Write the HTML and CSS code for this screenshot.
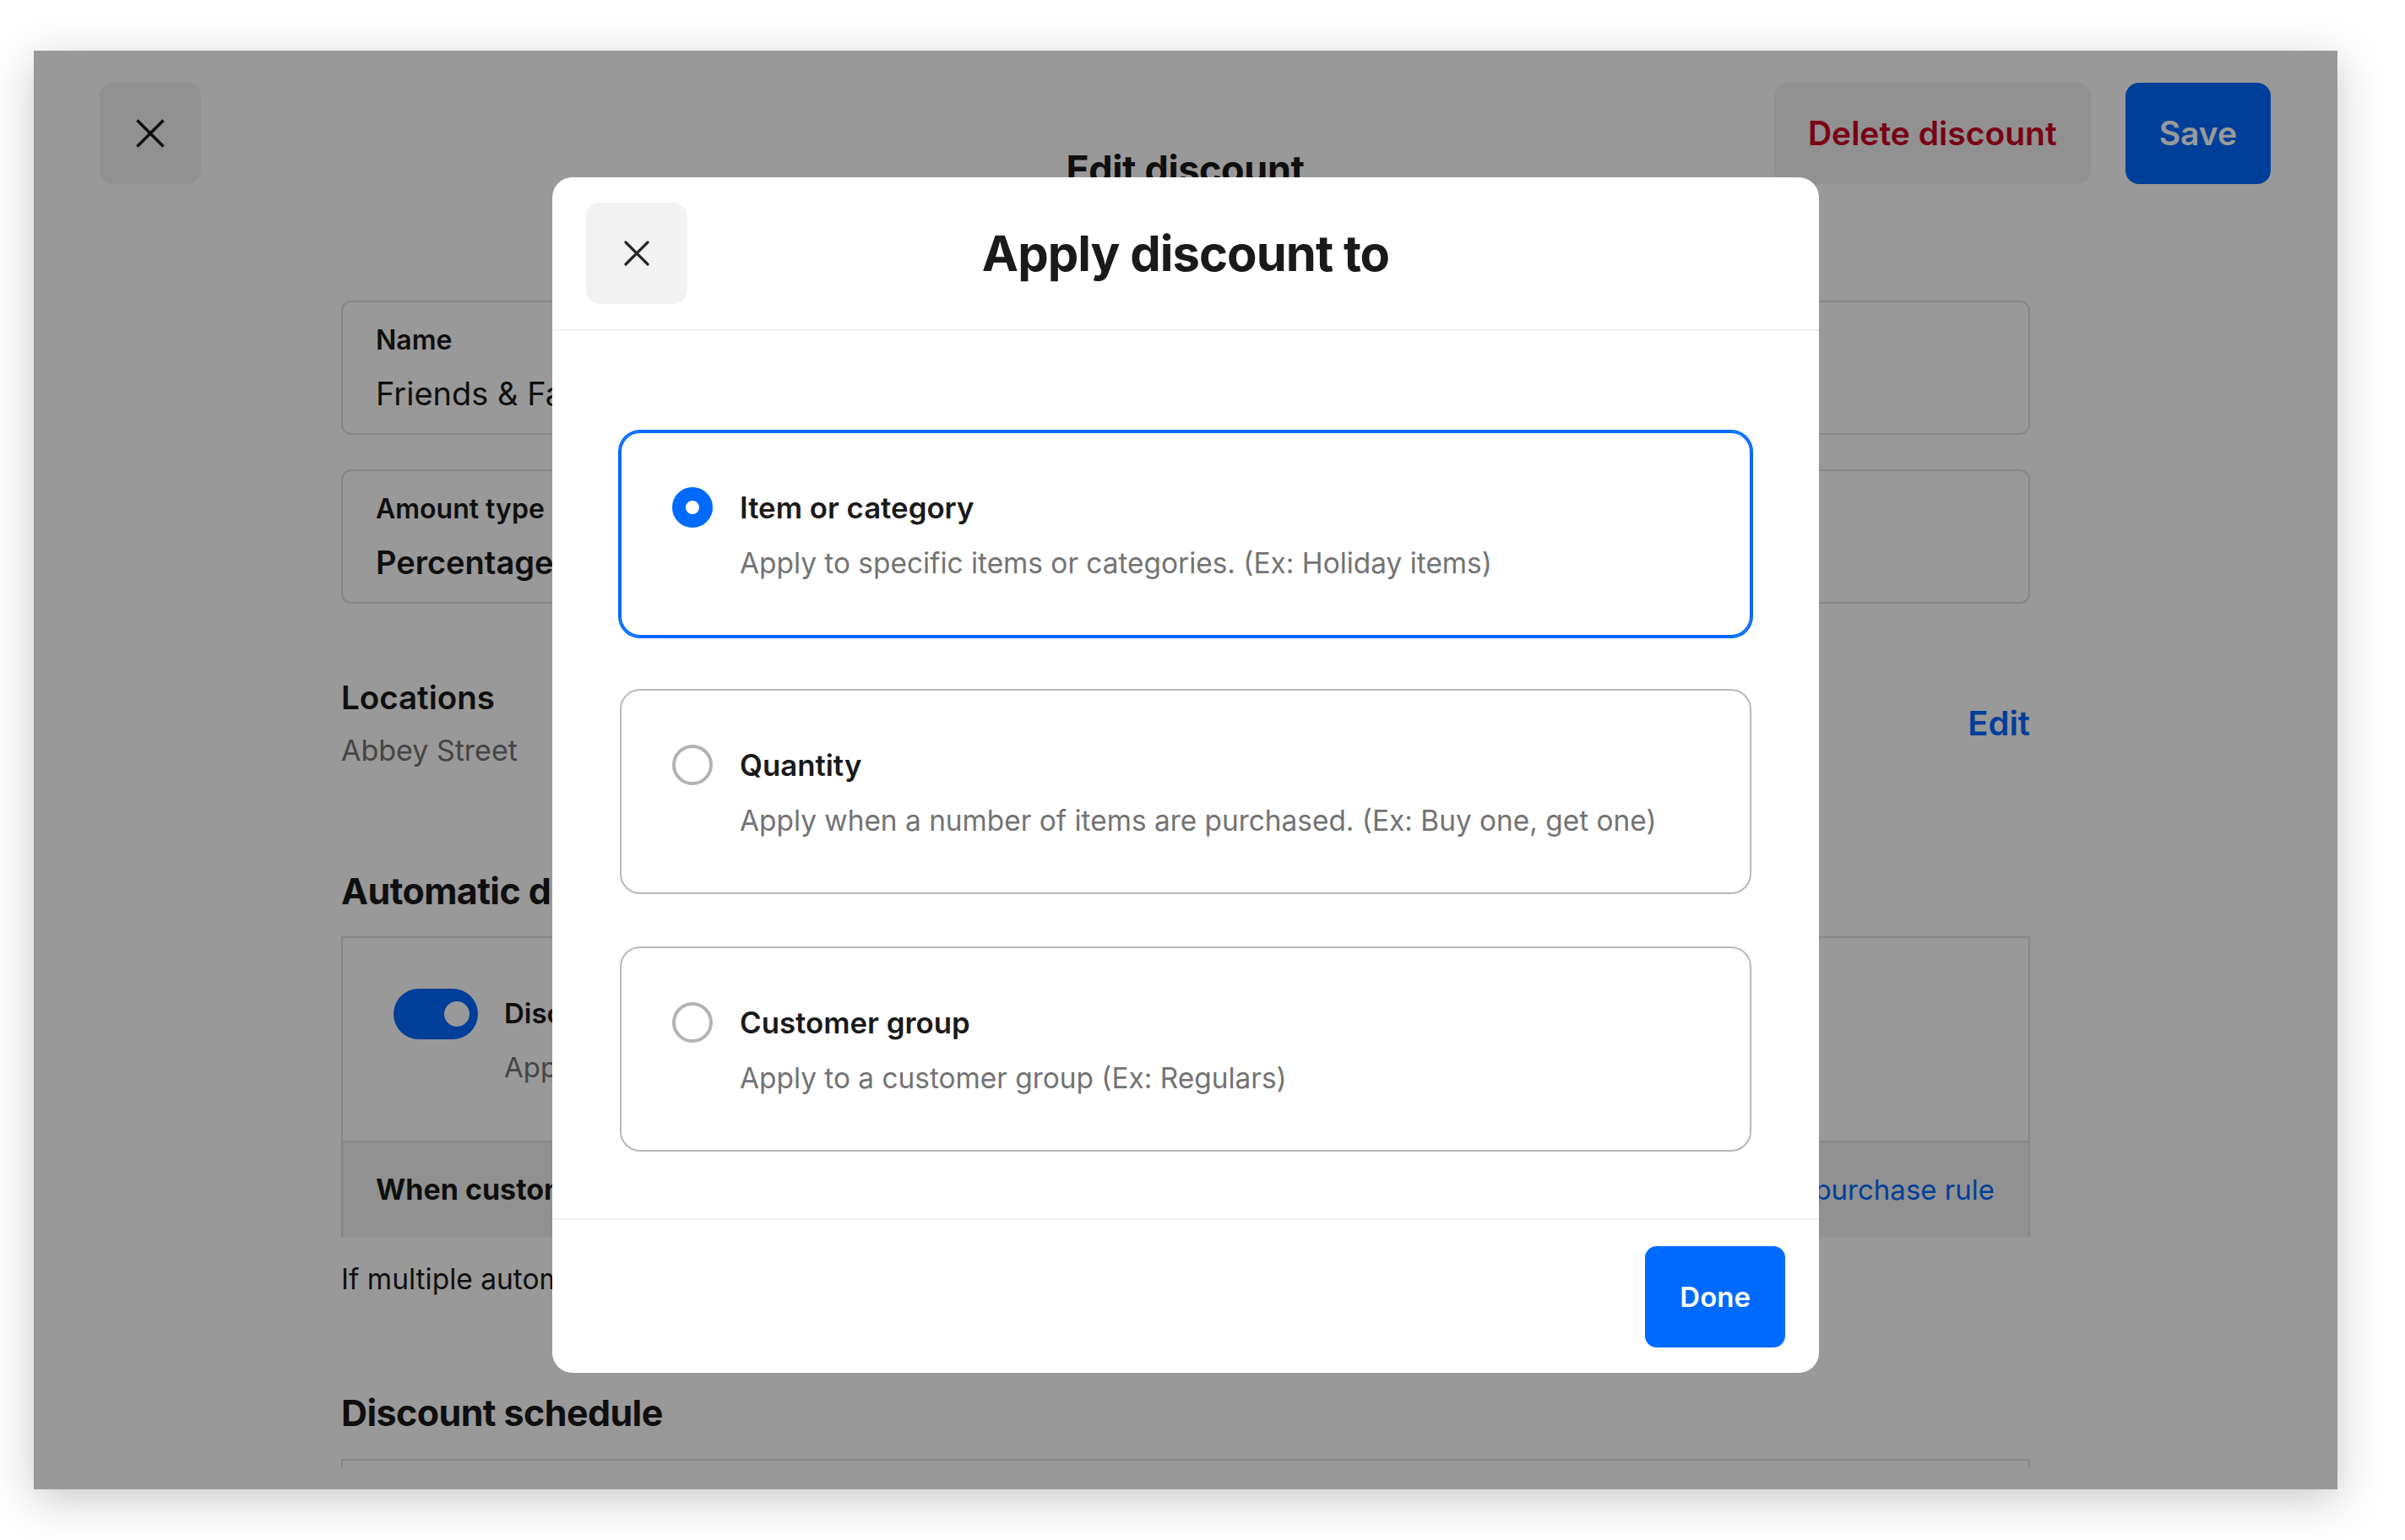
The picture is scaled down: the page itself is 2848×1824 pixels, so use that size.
FILE: index.html
```html
<!DOCTYPE html>
<html lang="en">
<head>
<meta charset="utf-8">
<title>Edit discount</title>
<link rel="stylesheet" href="styles.css">
</head>
<body>
<div class="window">
  <div class="page">
    <header class="page-header">
      <button class="icon-btn" aria-label="Close">
        <svg width="34" height="34" viewBox="0 0 34 34" aria-hidden="true">
          <path d="M1.5 1.5 L32.5 32.5 M32.5 1.5 L1.5 32.5" stroke="#1a1a1a" stroke-width="3.6" fill="none"/>
        </svg>
      </button>
      <h1 class="page-title">Edit discount</h1>
      <div class="header-actions">
        <button class="btn btn-danger">Delete discount</button>
        <button class="btn btn-primary">Save</button>
      </div>
    </header>

    <main class="form">
      <div class="field">
        <div class="field-label">Name</div>
        <div class="field-value">Friends &amp; Family</div>
      </div>
      <div class="field">
        <div class="field-label">Amount type</div>
        <div class="field-value field-value-strong">Percentage</div>
      </div>

      <section class="locations">
        <div>
          <h2 class="section-label">Locations</h2>
          <p class="muted">Abbey Street</p>
        </div>
        <a class="link" href="#">Edit</a>
      </section>

      <h2 class="section-title">Automatic discount</h2>
      <div class="auto-box">
        <div class="auto-row">
          <div class="toggle"><span class="toggle-knob"></span></div>
          <div class="auto-text">
            <div class="row-title">Discount rule</div>
            <div class="row-desc">Applied at sale</div>
          </div>
        </div>
        <div class="auto-footer">
          <span class="footer-label">When customers buy</span>
          <a class="footer-link" href="#">Add purchase rule</a>
        </div>
      </div>
      <p class="note">If multiple automatic discounts apply, the best one is used.</p>

      <h2 class="section-title section-title-schedule">Discount schedule</h2>
      <div class="schedule-box"></div>
    </main>
  </div>

  <div class="scrim"></div>

  <div class="dialog-layer">
    <div class="dialog" role="dialog" aria-labelledby="dialog-title">
      <div class="dialog-header">
        <button class="icon-btn dialog-close" aria-label="Close">
          <svg width="30" height="30" viewBox="0 0 30 30" aria-hidden="true">
            <path d="M2 2 L28 28 M28 2 L2 28" stroke="#262626" stroke-width="3.2" stroke-linecap="round" fill="none"/>
          </svg>
        </button>
        <h2 class="dialog-title" id="dialog-title">Apply discount to</h2>
        <span></span>
      </div>

      <div class="dialog-body">
        <div class="option option-selected">
          <span class="radio radio-checked"></span>
          <div>
            <div class="option-title">Item or category</div>
            <div class="option-desc">Apply to specific items or categories. (Ex: Holiday items)</div>
          </div>
        </div>
        <div class="option">
          <span class="radio"></span>
          <div>
            <div class="option-title">Quantity</div>
            <div class="option-desc">Apply when a number of items are purchased. (Ex: Buy one, get one)</div>
          </div>
        </div>
        <div class="option">
          <span class="radio"></span>
          <div>
            <div class="option-title">Customer group</div>
            <div class="option-desc">Apply to a customer group (Ex: Regulars)</div>
          </div>
        </div>
      </div>

      <div class="dialog-footer">
        <button class="btn btn-done">Done</button>
      </div>
    </div>
  </div>
</div>
</body>
</html>
```

FILE: styles.css
```css
* {
  box-sizing: border-box;
}

html,
body {
  margin: 0;
}

body {
  background: #ffffff;
  padding: 60px 80px 60px 40px;
  font-family: Inter, "Noto Sans", "Liberation Sans", sans-serif;
  color: #1a1a1a;
}

button {
  font-family: inherit;
  cursor: pointer;
}

/* Application window */
.window {
  position: relative;
  height: 1704px;
  overflow: hidden;
  background: #ffffff;
  box-shadow: 0 12px 50px rgba(0, 0, 0, 0.22);
}

.page {
  height: 1678px;
  overflow: hidden;
}

.page-header {
  display: grid;
  grid-template-columns: 1fr auto 1fr;
  align-items: start;
  padding: 38px 79px 0 78px;
}

.icon-btn {
  width: 120px;
  height: 120px;
  padding: 0;
  border: 0;
  border-radius: 16px;
  background: #f2f2f2;
  display: flex;
  align-items: center;
  justify-content: center;
}

.page-title {
  margin: 77px 0 0;
  font-size: 45px;
  line-height: 52px;
  font-weight: 700;
  letter-spacing: -0.4px;
}

.header-actions {
  justify-self: end;
  display: flex;
  gap: 41px;
}

.btn {
  height: 120px;
  padding: 0 40px;
  border: 0;
  border-radius: 16px;
  font-size: 39px;
  line-height: 48px;
  font-weight: 600;
}

.btn-danger {
  background: #f2f2f2;
  color: #cc0023;
}

.btn-primary {
  background: #006aff;
  color: #ffffff;
}

/* Form column */
.form {
  width: 2000px;
  margin: 129px auto 0;
}

.field {
  border: 2px solid #e0e0e0;
  border-radius: 12px;
  padding: 25px 39px 23px;
}

.field + .field {
  margin-top: 41px;
}

.field-label {
  font-size: 32px;
  line-height: 40px;
  font-weight: 600;
}

.field-value {
  margin-top: 19px;
  font-size: 38px;
  line-height: 48px;
  font-weight: 400;
}

.field-value-strong {
  font-weight: 600;
}

.locations {
  display: flex;
  justify-content: space-between;
  align-items: center;
  margin-top: 89px;
}

.section-label {
  margin: 0;
  font-size: 38.5px;
  line-height: 44px;
  font-weight: 600;
}

.muted {
  margin: 21px 0 0;
  font-size: 34px;
  line-height: 40px;
  color: #737373;
}

.link {
  color: #006aff;
  font-size: 40px;
  line-height: 44px;
  font-weight: 600;
  text-decoration: none;
}

.section-title {
  margin: 120px 0 0;
  font-size: 43px;
  line-height: 52px;
  font-weight: 700;
  letter-spacing: -0.6px;
}

.section-title-schedule {
  margin-top: 112px;
}

.auto-box {
  margin-top: 28px;
  border: 2px solid #e0e0e0;
  border-bottom: 0;
}

.auto-row {
  height: 240px;
  padding: 60px 60px 0;
  display: flex;
  align-items: flex-start;
  gap: 31px;
}

.toggle {
  flex: none;
  width: 100px;
  height: 60px;
  border-radius: 30px;
  background: #006aff;
  display: flex;
  align-items: center;
  justify-content: flex-end;
  padding-right: 10px;
}

.toggle-knob {
  width: 30px;
  height: 30px;
  border-radius: 50%;
  background: #ffffff;
}

.auto-text {
  padding-top: 9px;
}

.row-title {
  font-size: 33px;
  line-height: 40px;
  font-weight: 600;
}

.row-desc {
  margin-top: 24px;
  font-size: 33px;
  line-height: 40px;
  color: #737373;
}

.auto-footer {
  height: 114px;
  border-top: 2px solid #e0e0e0;
  background: #f2f2f2;
  padding: 0 40px 0 39px;
  display: flex;
  align-items: center;
  justify-content: space-between;
}

.footer-label {
  font-size: 34px;
  line-height: 40px;
  font-weight: 700;
}

.footer-link {
  color: #006aff;
  font-size: 33px;
  line-height: 40px;
  text-decoration: none;
}

.note {
  margin: 30px 0 0;
  font-size: 33.5px;
  line-height: 40px;
}

.schedule-box {
  margin-top: 29px;
  height: 200px;
  border: 2px solid #e0e0e0;
  border-bottom: 0;
}

/* Modal backdrop and dialog */
.scrim {
  position: absolute;
  inset: 0;
  background: rgba(0, 0, 0, 0.4);
}

.dialog-layer {
  position: absolute;
  inset: 0;
  display: flex;
  justify-content: center;
  align-items: flex-start;
  padding-top: 150px;
}

.dialog {
  width: 1500px;
  background: #ffffff;
  border-radius: 24px;
  overflow: hidden;
}

.dialog-header {
  display: grid;
  grid-template-columns: 1fr auto 1fr;
  align-items: center;
  padding: 30px 40px;
  border-bottom: 2px solid #f0f0f0;
}

.dialog-title {
  margin: 0;
  font-size: 58px;
  line-height: 64px;
  font-weight: 700;
  letter-spacing: -1px;
  color: #1a1a1a;
}

.dialog-body {
  padding: 119px 80px 79px;
  display: flex;
  flex-direction: column;
  gap: 62px;
}

.option {
  height: 243px;
  border: 2px solid #b8b8b8;
  border-radius: 24px;
  padding: 64px 60px 0;
  display: flex;
  align-items: flex-start;
  gap: 32px;
}

.option-selected {
  border-color: #006aff;
  box-shadow: 0 0 0 2px #006aff;
}

.radio {
  flex: none;
  width: 48px;
  height: 48px;
  border-radius: 50%;
  border: 4px solid #b3b3b3;
  background: #ffffff;
}

.radio-checked {
  border: 16px solid #006aff;
}

.option-title {
  font-size: 34.8px;
  line-height: 48px;
  font-weight: 600;
  color: #1a1a1a;
}

.option-desc {
  margin-top: 18px;
  font-size: 33.4px;
  line-height: 48px;
  color: #737373;
}

.dialog-footer {
  border-top: 2px solid #f0f0f0;
  padding: 31px 40px 30px;
  display: flex;
  justify-content: flex-end;
}

.btn-done {
  height: 120px;
  padding: 0 41px;
  border-radius: 14px;
  background: #006aff;
  color: #ffffff;
  font-size: 33px;
  font-weight: 600;
}
```
